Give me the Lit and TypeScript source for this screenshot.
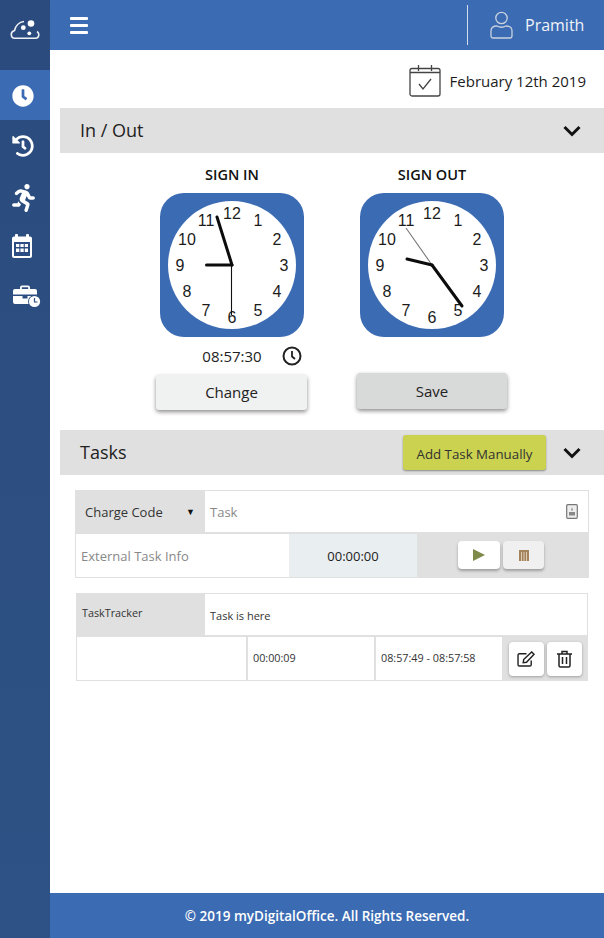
import { LitElement, html, css, svg } from "lit";
import { customElement, property } from "lit/decorators.js";

const NUMS = [12, 1, 2, 3, 4, 5, 6, 7, 8, 9, 10, 11];

@customElement("clock-face")
class ClockFace extends LitElement {
  @property({ type: Array }) hour: number[] = [0, 0];
  @property({ type: Array }) minute: number[] = [0, 0];
  @property({ type: Array }) second: number[] = [0, 0];
  @property({ type: Number }) secondOrigin = 0;
  @property() secondColor = "#111";
  static styles = css`
    :host { display: block; width: 144px; height: 144px; }
    svg { display: block; }
    .bg { fill: #3b6bb3; }
    .face { fill: #fff; }
    .num { font: 16px "Liberation Sans", Arial, sans-serif; fill: #1c1c1c; text-anchor: middle; dominant-baseline: central; }
    .thick { stroke: #0c0c0c; stroke-width: 3; stroke-linecap: round; }
    .thin { stroke-width: 1.1; }
  `;
  render() {
    return html`<svg width="144" height="144" viewBox="-72 -72 144 144">
      <rect class="bg" x="-72" y="-72" width="144" height="144" rx="24"></rect>
      <circle class="face" r="64"></circle>
      ${NUMS.map((n, i) => {
        const a = (i * Math.PI) / 6;
        return svg`<text class="num" x=${(52 * Math.sin(a)).toFixed(1)} y=${(-52 * Math.cos(a) + 0.5).toFixed(1)}>${n}</text>`;
      })}
      <line class="thin" style="stroke:${this.secondColor}" x1=${this.secondOrigin} y1="0" x2=${this.second[0]} y2=${this.second[1]}></line>
      <line class="thick" x1="0" y1="0" x2=${this.hour[0]} y2=${this.hour[1]}></line>
      <line class="thick" x1="0" y1="0" x2=${this.minute[0]} y2=${this.minute[1]}></line>
    </svg>`;
  }
}

const clockPath = "M256,8C119,8,8,119,8,256S119,504,256,504,504,393,504,256,393,8,256,8Zm92.49,313h0l-20,25a16,16,0,0,1-22.49,2.5h0l-67-49.72a40,40,0,0,1-15-31.23V112a16,16,0,0,1,16-16h32a16,16,0,0,1,16,16V256l58,42.5A16,16,0,0,1,348.49,321Z";
const historyPath = "M504 255.531c.253 136.64-111.18 248.372-247.82 248.468-59.015.042-113.223-20.53-155.822-54.911-11.077-8.94-11.905-25.541-1.839-35.607l11.267-11.267c8.609-8.609 22.353-9.551 31.891-1.984C173.062 425.135 212.781 440 256 440c101.705 0 184-82.311 184-184 0-101.705-82.311-184-184-184-48.814 0-93.149 18.969-126.068 49.932l50.754 50.754c10.08 10.08 2.941 27.314-11.313 27.314H24c-8.837 0-16-7.163-16-16V38.627c0-14.254 17.234-21.393 27.314-11.314l49.372 49.372C129.209 34.136 189.552 8 256 8c136.81 0 247.747 110.78 248 247.531zm-180.912 78.784l9.823-12.63c8.138-10.463 6.253-25.542-4.21-33.679L288 256.349V152c0-13.255-10.745-24-24-24h-16c-13.255 0-24 10.745-24 24v135.651l65.409 50.874c10.463 8.137 25.541 6.253 33.679-4.21z";
const runPath = "M272 96c26.51 0 48-21.49 48-48S298.51 0 272 0s-48 21.49-48 48 21.49 48 48 48zM113.69 317.47l-14.8 34.52H32c-17.67 0-32 14.33-32 32s14.33 32 32 32h77.45c19.25 0 36.58-11.44 44.11-29.09l8.79-20.52-10.67-6.3c-17.32-10.23-30.06-25.37-37.99-42.61zM384 223.99h-44.03l-26.06-53.25c-12.5-25.55-35.45-44.23-61.78-50.94l-71.08-21.14c-28.3-6.8-57.77-.55-80.84 17.14l-39.67 30.41c-14.03 10.75-16.69 30.83-5.92 44.86s30.84 16.66 44.86 5.92l39.69-30.41c7.67-5.89 17.44-8 25.27-6.14l14.7 4.37-37.46 87.39c-12.62 29.48-1.31 64.01 26.3 80.31l84.98 50.17-27.47 87.73c-5.28 16.86 4.11 34.81 20.97 40.09 3.19 1 6.41 1.48 9.58 1.48 13.61 0 26.23-8.77 30.52-22.45l31.64-101.06c5.91-20.77-2.89-43.08-21.64-54.39l-61.24-36.11 31.31-78.28 20.27 41.43c8 16.34 24.92 26.89 43.11 26.89H384c17.67 0 32-14.33 32-32s-14.33-31.99-32-31.99z";

const chevron = html`<svg class="chev" width="18" height="12" viewBox="0 0 18 12"><path d="M1.500 2 9 9.500 16.500 2" fill="none" stroke="#111" stroke-width="3"></path></svg>`;

@customElement("app-root")
class AppRoot extends LitElement {
  static styles = css`
    :host { display: block; width: 604px; height: 938px; font-family: "Open Sans", sans-serif; color: #222; background: #fff; }
    .shell { display: flex; height: 938px; }
    .side { width: 50px; flex: none; background: linear-gradient(#2b4b7e, #2e5285); display: flex; flex-direction: column; }
    .logo { height: 50px; box-sizing: border-box; padding: 10px 1px 0 0; margin-bottom: 20px; display: flex; align-items: center; justify-content: center; }
    .nav { height: 50px; display: flex; align-items: center; justify-content: center; box-sizing: border-box; }
    .nav.active { background: #3b6bb3; }
    .nav svg { fill: #fff; display: block; }
    .n1 { padding: 2px 4px 0 0; }
    .n2 { padding: 6px 3px 0 0; }
    .n3 { padding: 1px 7px 0 0; }
    .n4 { padding: 2px 0 0 3px; }
    .main { flex: 1; display: flex; flex-direction: column; min-width: 0; }
    .top { height: 50px; flex: none; background: #3b6bb3; display: flex; align-items: center; padding-left: 20px; }
    .burger { width: 18px; height: 17px; display: flex; flex-direction: column; justify-content: space-between; }
    .burger i { display: block; height: 3px; background: #fff; border-radius: 1px; }
    .user { margin-left: auto; height: 40px; width: 137px; border-left: 1px solid #d5deec; display: flex; align-items: center; box-sizing: border-box; padding-left: 22px; gap: 12px; color: #f0f3f8; font-size: 16px; font-weight: 400; }
    .content { flex: 1; padding-left: 10px; min-height: 0; }
    .date { height: 58px; box-sizing: border-box; padding: 3px 18px 0 0; display: flex; align-items: center; justify-content: flex-end; gap: 9px; font-size: 15px; color: #1c1c1c; }
    .bar { height: 45px; background: #e0e0e0; display: flex; align-items: center; padding: 0 23px 0 20px; font-size: 18px; color: #222; }
    .bar > span { padding-bottom: 2px; }
    .bar .chev { margin-left: auto; }
    .add { margin-left: auto; margin-right: 17px; width: 143px; height: 35px; box-sizing: border-box; padding-top: 2px; background: #cad24f; border-radius: 3px; box-shadow: 0 1px 2px rgba(0,0,0,.4); display: flex; align-items: center; justify-content: center; font-size: 13.3px; color: #333; }
    .add + .chev { margin-left: 0; }
    .clocks { display: flex; justify-content: center; height: 277px; }
    .col { width: 200px; display: flex; flex-direction: column; align-items: center; }
    .label { font-size: 14.5px; font-weight: 600; color: #111; height: 40px; line-height: 44px; }
    .time { height: 38px; display: flex; align-items: center; justify-content: center; font-size: 15px; color: #222; position: relative; width: 100%; }
    .time svg { position: absolute; left: 150px; top: 9px; }
    .btn { width: 151px; margin-right: 1px; height: 35px; box-sizing: border-box; padding-bottom: 2px; display: flex; align-items: center; justify-content: center; font-size: 15px; color: #222; border-radius: 3px; background: #f0f1f1; box-shadow: 0 2px 4px rgba(0,0,0,.45); }
    .btn.save { background: #d8d9d9; margin: -2px 0 0; width: 150px; height: 36px; padding-bottom: 0; }
    .form { margin: 15px 15px 0; border: 1px solid #e0e0e0; box-sizing: border-box; }
    .row { display: flex; height: 43px; }
    .cc { width: 129px; background: #e0e0e0; display: flex; align-items: center; padding: 0 10px 2px 9px; box-sizing: border-box; font-size: 13px; color: #333; justify-content: space-between; }
    .caret { font-size: 9px; color: #111; }
    .input { flex: 1; display: flex; align-items: center; padding: 0 0 0 5px; font-size: 13px; color: #888; border-bottom: 2px solid #e0e0e0; box-sizing: border-box; }
    .badge { margin-left: auto; margin-right: 10px; display: block; }
    .ext { width: 213px; padding: 0 0 0 5px; display: flex; align-items: center; box-sizing: border-box; font-size: 13px; color: #888; }
    .timer { width: 128px; box-sizing: border-box; background: #e9eef0; display: flex; align-items: center; justify-content: center; font-size: 13px; color: #222; }
    .ctrl { flex: 1; background: #e0e0e0; display: flex; align-items: flex-start; padding: 7px 0 0 41px; gap: 3px; }
    .cbtn { width: 42px; height: 28px; border-radius: 4px; background: #fff; display: flex; align-items: center; justify-content: center; box-shadow: 0 2px 3px rgba(0,0,0,.3); }
    .cbtn.off { width: 41px; background: #f0f0f0; }
    .card { margin: 15px 16px 0; border: 1px solid #e0e0e0; box-sizing: border-box; }
    .tt { width: 128px; background: #e0e0e0; font-size: 10.8px; color: #333; padding: 11px 0 0 5px; box-sizing: border-box; }
    .tt-task { flex: 1; font-size: 11px; color: #333; padding: 14px 0 0 5px; box-sizing: border-box; border-bottom: 2px solid #e0e0e0; }
    .c1 { width: 171px; box-sizing: border-box; border-right: 2px solid #e0e0e0; }
    .c2 { width: 128px; box-sizing: border-box; border-right: 2px solid #e0e0e0; font-size: 10.8px; color: #333; padding: 0 0 3px 5px; display: flex; align-items: center; }
    .c2.wide { width: 126px; border-right: 0; }
    .c0 { flex: 1; background: #e0e0e0; display: flex; align-items: flex-start; padding: 5px 0 0 7px; gap: 3px; }
    .ibtn { width: 35px; height: 34px; border-radius: 4px; background: #fff; display: flex; align-items: center; justify-content: center; box-shadow: 0 1px 3px rgba(0,0,0,.3); }
    .foot { height: 45px; flex: none; background: #3b6bb3; color: #fff; display: flex; align-items: center; justify-content: center; font-size: 13.5px; font-weight: 600; }
  `;
  render() {
    return html`<div class="shell">
      <aside class="side">
        <div class="logo"><svg width="30" height="20" viewBox="0 0 30 20" fill="none" stroke="#eef1f6" stroke-width="1.600"><path d="M4.500 18.300H25.500C29 18.300 30 13.500 27 11.500M4.500 18.300C1 18.300-.5 12 4.500 10.500 5.500 6 9 2 14 1.500"></path><circle cx="21" cy="3.500" r="3.300" fill="#fff" stroke="none"></circle><circle cx="13.300" cy="7.700" r="2.400" fill="#fff" stroke="none"></circle><circle cx="19.300" cy="13.300" r="1.900" fill="#fff" stroke="none"></circle></svg></div>
        <div class="nav active n1"><svg width="22" height="22" viewBox="0 0 512 512"><path d=${clockPath}></path></svg></div>
        <div class="nav n1"><svg width="22" height="22" viewBox="0 0 512 512"><path d=${historyPath}></path></svg></div>
        <div class="nav n2"><svg width="23" height="28" viewBox="0 0 416 512"><path d=${runPath}></path></svg></div>
        <div class="nav n3"><svg width="20" height="24" viewBox="0 0 20 24"><path d="M3 2.500V1Q3 0 4 0H5Q6 0 6 1V2.500H14V1Q14 0 15 0H16Q17 0 17 1V2.500H18Q20 2.500 20 4.500V22Q20 24 18 24H2Q0 24 0 22V4.500Q0 2.500 2 2.500Z"></path><rect x="2" y="8" width="16" height="14" fill="#2c4d81"></rect><path d="M4 10H7.300V13H4ZM8.400 10H11.700V13H8.400ZM12.800 10H16V13H12.800ZM4 14.500H7.300V18H4ZM8.400 14.500H11.700V18H8.400ZM12.800 14.500H16V18H12.800Z"></path></svg></div>
        <div class="nav n4"><svg width="28" height="23" viewBox="0 0 28 23"><path d="M7 5V2.500Q7 .5 9 .5H15Q17 .5 17 2.500V5H15.200V2.300H8.800V5Z"></path><path d="M2 4H22Q24 4 24 6V9.500H0V6Q0 4 2 4ZM0 11H9.500V13.500H14.500V11H24V10.800A7.500 7.500 0 0 0 16 19H2Q0 19 0 17Z"></path><circle cx="21.500" cy="16.500" r="6.500" fill="#2c4d81"></circle><circle cx="21.500" cy="16.500" r="5.600"></circle><path d="M21.500 13V17H24.500" stroke="#2c4d81" stroke-width="1.200" fill="none"></path></svg></div>
      </aside>
      <div class="main">
        <header class="top">
          <div class="burger"><i></i><i></i><i></i></div>
          <div class="user">
            <svg width="23" height="28" viewBox="0 0 23 28" fill="none" stroke="#c9d2df" stroke-width="1.300"><circle cx="11.500" cy="7" r="5.700"></circle><path d="M3 27Q1 27 1 24.500V20Q1 15 7 15 11.500 17.500 16 15 22 15 22 20V24.500Q22 27 20 27Z"></path></svg>
            <span>Pramith</span>
          </div>
        </header>
        <main class="content">
          <div class="date">
            <svg width="32" height="32" viewBox="0 0 32 32" fill="none" stroke="#444" stroke-width="1.300"><rect x="1" y="3.500" width="30" height="27.500" rx="2"></rect><path d="M1 7.500H31M9.500 0V6M22.500 0V6M10 19 14 24 22 14"></path></svg>
            <span>February 12th 2019</span>
          </div>
          <div class="bar"><span>In / Out</span>${chevron}</div>
          <div class="clocks">
            <div class="col">
              <div class="label">SIGN IN</div>
              <clock-face .hour=${[-25.5, 0]} .minute=${[-15, -48]} .second=${[-0.5, 50]} .secondOrigin=${-0.5}></clock-face>
              <div class="time"><span>08:57:30</span><svg width="20" height="20" viewBox="0 0 20 20" fill="none" stroke="#222" stroke-width="2"><circle cx="10" cy="10" r="8.500"></circle><path d="M10 5V10.500L13 13" stroke-width="1.800"></path></svg></div>
              <div class="btn">Change</div>
            </div>
            <div class="col">
              <div class="label">SIGN OUT</div>
              <clock-face .hour=${[-25, -6]} .minute=${[30, 41]} .second=${[-26, -37]} secondColor="#777"></clock-face>
              <div class="time"></div>
              <div class="btn save">Save</div>
            </div>
          </div>
          <div class="bar"><span>Tasks</span><div class="add">Add Task Manually</div>${chevron}</div>
          <div class="form">
            <div class="row">
              <div class="cc"><span>Charge Code</span><span class="caret">▼</span></div>
              <div class="input"><span>Task</span><svg class="badge" width="12" height="15" viewBox="0 0 12 15"><rect x=".7" y=".7" width="10.600" height="13.600" rx="1" fill="#eee" stroke="#777" stroke-width="1.200"></rect><path d="M6 3 7 6.500H5ZM3 8H9V11.500H3Z" fill="#888"></path></svg></div>
            </div>
            <div class="row">
              <div class="ext">External Task Info</div>
              <div class="timer">00:00:00</div>
              <div class="ctrl">
                <div class="cbtn"><svg width="12" height="12" viewBox="0 0 12 12"><path d="M0 0 12 6 0 12Z" fill="#7d8a4a"></path></svg></div>
                <div class="cbtn off"><svg width="10" height="11" viewBox="0 0 10 11"><rect width="10" height="11" fill="#a5835a"></rect><path d="M2.500 2V11M5 2V11M7.500 2V11" stroke="#e8e0d0" stroke-width=".8"></path></svg></div>
              </div>
            </div>
          </div>
          <div class="card">
            <div class="row"><div class="tt">TaskTracker</div><div class="tt-task">Task is here</div></div>
            <div class="row">
              <div class="c1"></div>
              <div class="c2">00:00:09</div>
              <div class="c2 wide">08:57:49 - 08:57:58</div>
              <div class="c0">
                <div class="ibtn"><svg width="19" height="16" viewBox="0 0 20 17" fill="none" stroke="#222" stroke-width="1.500"><path d="M15 10V14.500Q15 16 13.500 16H2.500Q1 16 1 14.500V4.500Q1 3 2.500 3H10"></path><path d="M7 9 15.500 1 18 3.500 10 12 6.500 12.500Z"></path></svg></div>
                <div class="ibtn"><svg width="15" height="18" viewBox="0 0 15 18" fill="none" stroke="#222" stroke-width="1.500"><path d="M0 4H15M5 4V1.500H10V4M2 4V15.500Q2 17 3.500 17H11.500Q13 17 13 15.500V4M5.500 7V14M9.500 7V14"></path></svg></div>
              </div>
            </div>
          </div>
        </main>
        <footer class="foot">© 2019 myDigitalOffice. All Rights Reserved.</footer>
      </div>
    </div>`;
  }
}
